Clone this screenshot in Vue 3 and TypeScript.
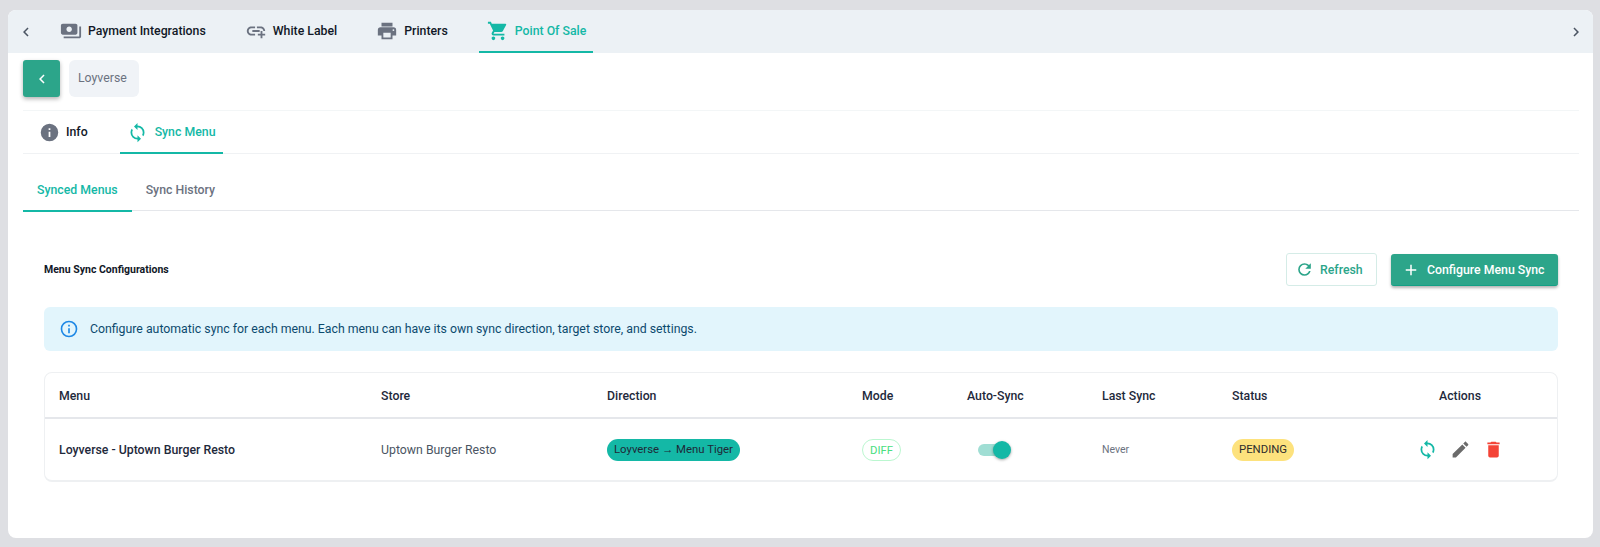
<script setup lang="ts">
const icons = {
  chevronLeft: 'M15.41,16.58L10.83,12L15.41,7.41L14,6L8,12L14,18L15.41,16.58Z',
  chevronRight: 'M8.59,16.58L13.17,12L8.59,7.41L10,6L16,12L10,18L8.59,16.58Z',
  payments: 'M19 14V6c0-1.1-.9-2-2-2H3c-1.1 0-2 .9-2 2v8c0 1.1.9 2 2 2h14c1.1 0 2-.9 2-2zm-9-1c-1.66 0-3-1.34-3-3s1.34-3 3-3 3 1.34 3 3-1.34 3-3 3zm13-6v11c0 1.1-.9 2-2 2H4v-2h17V7h2z',
  linkPlus: 'M7 7C4.24 7 2 9.24 2 12S4.24 17 7 17H11V15H7C5.34 15 4 13.66 4 12S5.34 9 7 9H11V7H7M13 7V9H17C18.66 9 20 10.34 20 12H22C22 9.24 19.76 7 17 7H13M8 11V13H16V11H8M17 12V15H14V17H17V20H19V17H22V15H19V12H17Z',
  printer: 'M18,3H6V7H18M19,12A1,1 0 0,1 18,11A1,1 0 0,1 19,10A1,1 0 0,1 20,11A1,1 0 0,1 19,12M16,19H8V14H16M19,8H5A3,3 0 0,0 2,11V17H6V21H18V17H22V11A3,3 0 0,0 19,8Z',
  cart: 'M17,18C15.89,18 15,18.89 15,20A2,2 0 0,0 17,22A2,2 0 0,0 19,20C19,18.89 18.1,18 17,18M1,2V4H3L6.6,11.59L5.24,14.04C5.09,14.32 5,14.65 5,15A2,2 0 0,0 7,17H19V15H7.42A0.25,0.25 0 0,1 7.17,14.75C7.17,14.7 7.18,14.66 7.2,14.63L8.1,13H15.55C16.3,13 16.96,12.58 17.3,11.97L20.88,5.5C20.95,5.34 21,5.17 21,5A1,1 0 0,0 20,4H5.21L4.27,2M7,18C5.89,18 5,18.89 5,20A2,2 0 0,0 7,22A2,2 0 0,0 9,20C9,18.89 8.1,18 7,18Z',
  info: 'M13,9H11V7H13M13,17H11V11H13M12,2A10,10 0 0,0 2,12A10,10 0 0,0 12,22A10,10 0 0,0 22,12A10,10 0 0,0 12,2Z',
  infoOutline: 'M11,9H13V7H11M12,20C7.59,20 4,16.41 4,12C4,7.59 7.59,4 12,4C16.41,4 20,7.59 20,12C20,16.41 16.41,20 12,20M12,2A10,10 0 0,0 2,12A10,10 0 0,0 12,22A10,10 0 0,0 22,12A10,10 0 0,0 12,2M11,17H13V11H11V17Z',
  sync: 'M12,18A6,6 0 0,1 6,12C6,11 6.25,10.03 6.7,9.2L5.24,7.74C4.46,8.97 4,10.43 4,12A8,8 0 0,0 12,20V23L16,19L12,15M12,4V1L8,5L12,9V6A6,6 0 0,1 18,12C18,13 17.75,13.97 17.3,14.8L18.76,16.26C19.54,15.03 20,13.57 20,12A8,8 0 0,0 12,4Z',
  refresh: 'M17.65,6.35C16.2,4.9 14.21,4 12,4A8,8 0 0,0 4,12A8,8 0 0,0 12,20C15.73,20 18.84,17.45 19.73,14H17.65C16.83,16.33 14.61,18 12,18A6,6 0 0,1 6,12A6,6 0 0,1 12,6C13.66,6 15.14,6.69 16.22,7.78L13,11H20V4L17.65,6.35Z',
  plus: 'M19,13H13V19H11V13H5V11H11V5H13V11H19V13Z',
  pencil: 'M20.71,7.04C21.1,6.65 21.1,6 20.71,5.63L18.37,3.29C18,2.9 17.35,2.9 16.96,3.29L15.12,5.12L18.87,8.87M3,17.25V21H6.75L17.81,9.93L14.06,6.18L3,17.25Z',
  trash: 'M19,4H15.5L14.5,3H9.5L8.5,4H5V6H19M6,19A2,2 0 0,0 8,21H16A2,2 0 0,0 18,19V7H6V19Z',
}

const topTabs = [
  { label: 'Payment Integrations', icon: icons.payments, active: false },
  { label: 'White Label', icon: icons.linkPlus, active: false },
  { label: 'Printers', icon: icons.printer, active: false },
  { label: 'Point Of Sale', icon: icons.cart, active: true },
]

const columns = [
  { label: 'Menu', width: 322 },
  { label: 'Store', width: 226 },
  { label: 'Direction', width: 255 },
  { label: 'Mode', width: 105 },
  { label: 'Auto-Sync', width: 135 },
  { label: 'Last Sync', width: 130 },
  { label: 'Status', width: 143 },
  { label: 'Actions', width: 198, center: true },
]
</script>

<template>
  <div class="page">
    <div class="card">
      <div class="top-bar">
        <svg class="top-chevron" viewBox="0 0 24 24"><path :d="icons.chevronLeft" /></svg>
        <div class="top-tabs">
          <div v-for="tab in topTabs" :key="tab.label" class="top-tab" :class="{ active: tab.active }">
            <svg viewBox="0 0 24 24"><path :d="tab.icon" /></svg>
            <span>{{ tab.label }}</span>
          </div>
        </div>
        <svg class="top-chevron" viewBox="0 0 24 24"><path :d="icons.chevronRight" /></svg>
      </div>

      <div class="content">
        <div class="crumbs">
          <button class="back-btn">
            <svg viewBox="0 0 24 24"><path :d="icons.chevronLeft" /></svg>
          </button>
          <div class="crumb">Loyverse</div>
        </div>

        <div class="inner-tabs">
          <div class="inner-tab">
            <svg class="info-icon" viewBox="0 0 24 24"><path :d="icons.info" /></svg>
            <span>Info</span>
          </div>
          <div class="inner-tab active">
            <svg viewBox="0 0 24 24"><path :d="icons.sync" /></svg>
            <span>Sync Menu</span>
          </div>
        </div>

        <div class="sub-tabs">
          <div class="sub-tab active">Synced Menus</div>
          <div class="sub-tab">Sync History</div>
        </div>

        <div class="panel">
          <div class="panel-head">
            <h3>Menu Sync Configurations</h3>
            <div class="panel-actions">
              <button class="btn-outline">
                <svg viewBox="0 0 24 24"><path :d="icons.refresh" /></svg>
                Refresh
              </button>
              <button class="btn-solid">
                <svg viewBox="0 0 24 24"><path :d="icons.plus" /></svg>
                Configure Menu Sync
              </button>
            </div>
          </div>

          <div class="alert">
            <svg viewBox="0 0 24 24"><path :d="icons.infoOutline" /></svg>
            <span>Configure automatic sync for each menu. Each menu can have its own sync direction, target store, and settings.</span>
          </div>

          <div class="table-wrap">
            <table>
              <colgroup>
                <col v-for="col in columns" :key="col.label" :style="{ width: `${col.width}px` }" />
              </colgroup>
              <thead>
                <tr>
                  <th v-for="col in columns" :key="col.label" :class="{ center: col.center }">{{ col.label }}</th>
                </tr>
              </thead>
              <tbody>
                <tr>
                  <td class="menu-name">Loyverse - Uptown Burger Resto</td>
                  <td class="store-name">Uptown Burger Resto</td>
                  <td><span class="chip chip-direction">Loyverse → Menu Tiger</span></td>
                  <td><span class="chip chip-mode">DIFF</span></td>
                  <td>
                    <span class="switch"><span class="switch-track"></span><span class="switch-thumb"></span></span>
                  </td>
                  <td class="last-sync">Never</td>
                  <td><span class="chip chip-status">PENDING</span></td>
                  <td class="center">
                    <div class="row-actions">
                      <svg class="act-sync" viewBox="0 0 24 24"><path :d="icons.sync" /></svg>
                      <svg class="act-edit" viewBox="0 0 24 24"><path :d="icons.pencil" /></svg>
                      <svg class="act-delete" viewBox="0 0 24 24"><path :d="icons.trash" /></svg>
                    </div>
                  </td>
                </tr>
              </tbody>
            </table>
          </div>
        </div>
      </div>
    </div>
  </div>
</template>

<style>
html,
body {
  background: #dedfe3;
}
</style>

<style scoped>
.page {
  height: 547px;
  box-sizing: border-box;
  padding: 10px 7px 9px 8px;
  font-family: Roboto, "Liberation Sans", sans-serif;
  background: #dedfe3;
}

.card {
  height: 528px;
  background: #fff;
  border-radius: 8px;
  overflow: hidden;
}

.top-bar {
  height: 43px;
  display: flex;
  align-items: center;
  padding: 0 8px 0 9px;
  background: #ecf1f5;
}

.top-chevron {
  width: 18px;
  height: 18px;
  fill: #4b5563;
  flex: none;
}

.top-tabs {
  flex: 1;
  display: flex;
  height: 100%;
  padding-left: 17px;
}

.top-tab {
  height: 100%;
  box-sizing: border-box;
  display: flex;
  align-items: center;
  gap: 6px;
  padding: 1px 7px 0 8px;
  margin-right: 24px;
  font-size: 12.3px;
  font-weight: 500;
  color: #111827;
  border-bottom: 2px solid transparent;
}

.top-tab svg {
  width: 22px;
  height: 22px;
  fill: #6b7280;
}

.top-tab.active {
  color: #14b8a6;
  border-bottom-color: #14b8a6;
}

.top-tab.active svg {
  fill: #14b8a6;
}

.content {
  padding: 7px 14px 0 15px;
}

.crumbs {
  display: flex;
  gap: 9px;
  height: 37px;
  padding-bottom: 13px;
  border-bottom: 1px solid #f3f6f7;
}

.back-btn {
  width: 37px;
  height: 37px;
  border: 0;
  padding: 0;
  border-radius: 3px;
  background: #2ca58a;
  box-shadow: 0 2px 4px rgba(0, 0, 0, 0.3);
  display: flex;
  align-items: center;
  justify-content: center;
}

.back-btn svg {
  width: 18px;
  height: 18px;
  fill: #fff;
}

.crumb {
  width: 70px;
  height: 37px;
  box-sizing: border-box;
  padding-left: 9px;
  border-radius: 6px;
  background: #f0f3f7;
  color: #6b7280;
  font-size: 12.3px;
  line-height: 36px;
}

.inner-tabs {
  display: flex;
  height: 42px;
  padding-left: 9px;
  border-bottom: 1px solid #f0f2f4;
}

.inner-tab {
  height: 43px;
  box-sizing: border-box;
  display: flex;
  align-items: center;
  gap: 6px;
  padding: 1px 7px 0;
  font-size: 12.3px;
  font-weight: 500;
  color: #111827;
  border-bottom: 2px solid transparent;
}

.inner-tab svg {
  width: 21px;
  height: 21px;
  fill: #14b8a6;
}

.inner-tab svg.info-icon {
  fill: #6b7280;
}

.inner-tab + .inner-tab {
  margin-left: 25px;
}

.inner-tab.active {
  gap: 7px;
  padding-right: 8px;
  color: #14b8a6;
  border-bottom-color: #14b8a6;
}

.sub-tabs {
  display: flex;
  height: 57px;
  box-sizing: border-box;
  border-bottom: 1px solid #e5e7eb;
}

.sub-tab {
  height: 58px;
  box-sizing: border-box;
  display: flex;
  align-items: center;
  padding: 16px 14px 0;
  font-size: 12.3px;
  font-weight: 500;
  color: #6b7280;
  border-bottom: 2px solid transparent;
}

.sub-tab.active {
  color: #14b8a6;
  border-bottom-color: #14b8a6;
}

.panel {
  padding: 42px 21px 0;
}

.panel-head {
  display: flex;
  align-items: center;
  justify-content: space-between;
}

.panel-head h3 {
  margin: 0;
  font-size: 10.5px;
  font-weight: 700;
  color: #111827;
}

.panel-actions {
  display: flex;
  align-items: flex-end;
  gap: 14px;
}

.btn-outline,
.btn-solid {
  box-sizing: border-box;
  display: flex;
  align-items: center;
  font-family: inherit;
  font-size: 12.3px;
  font-weight: 500;
  white-space: nowrap;
  border-radius: 3px;
}

.btn-outline {
  width: 91px;
  height: 33px;
  gap: 6px;
  padding: 0 0 0 8px;
  background: #fff;
  color: #2ca58a;
  border: 1px solid #d5ece7;
}

.btn-outline svg {
  width: 19px;
  height: 19px;
  fill: #2ca58a;
}

.btn-solid {
  width: 167px;
  height: 32px;
  gap: 7px;
  padding: 0 0 0 11px;
  background: #2ca58a;
  color: #fff;
  border: 0;
  border-bottom: 1px solid #12a085;
  box-shadow: 0 2px 3px rgba(0, 0, 0, 0.3);
}

.btn-solid svg {
  width: 18px;
  height: 18px;
  fill: #fff;
}

.alert {
  margin-top: 21px;
  height: 44px;
  display: flex;
  align-items: center;
  gap: 11px;
  padding-left: 15px;
  border-radius: 6px;
  background: #e2f5fc;
  color: #0c4a6e;
  font-size: 12.3px;
}

.alert svg {
  width: 20px;
  height: 20px;
  fill: #1e88e5;
  flex: none;
}

.table-wrap {
  margin-top: 21px;
  width: 1514px;
  box-sizing: border-box;
  border: 1px solid #eef0f2;
  border-bottom-width: 2px;
  border-radius: 8px;
  overflow: hidden;
}

table {
  width: 100%;
  table-layout: fixed;
  border-collapse: collapse;
}

th {
  height: 43px;
  padding: 1px 0 0 14px;
  text-align: left;
  font-size: 12.3px;
  font-weight: 500;
  color: #1e293b;
  border-bottom: 2px solid #e5e7eb;
}

td {
  height: 61px;
  padding: 0 0 0 14px;
  font-size: 12.3px;
  color: #1e293b;
}

th.center,
td.center {
  text-align: center;
  padding-left: 0;
}

.menu-name {
  font-weight: 500;
}

.store-name {
  color: #4b5563;
}

.last-sync {
  font-size: 10.5px;
  color: #6b7280;
}

.chip {
  display: inline-block;
  height: 22px;
  line-height: 21px;
  box-sizing: border-box;
  padding: 0 7px;
  border-radius: 11px;
  font-size: 11.375px;
  vertical-align: middle;
}

.chip-direction {
  background: #14b8a6;
  color: #1f2937;
}

.chip-mode {
  border: 1px solid #bbf7d0;
  color: #4ade80;
}

.chip-status {
  background: #fde27d;
  color: #2d2d2d;
}

.switch {
  position: relative;
  display: inline-block;
  width: 33px;
  height: 18px;
  margin-left: 11px;
  vertical-align: middle;
}

.switch-track {
  position: absolute;
  left: 0;
  top: 3px;
  width: 30px;
  height: 12px;
  border-radius: 6px;
  background: #a0ded4;
}

.switch-thumb {
  position: absolute;
  right: 0;
  top: 0;
  width: 18px;
  height: 18px;
  border-radius: 50%;
  background: #14b8a6;
  box-shadow: 0 1px 3px rgba(0, 0, 0, 0.35);
}

.row-actions {
  display: flex;
  align-items: center;
  justify-content: center;
  gap: 12px;
}

.row-actions svg {
  width: 21px;
  height: 21px;
}

.act-sync {
  fill: #14b8a6;
}

.act-edit {
  fill: #6b6b6b;
}

.act-delete {
  fill: #f44336;
}
</style>
